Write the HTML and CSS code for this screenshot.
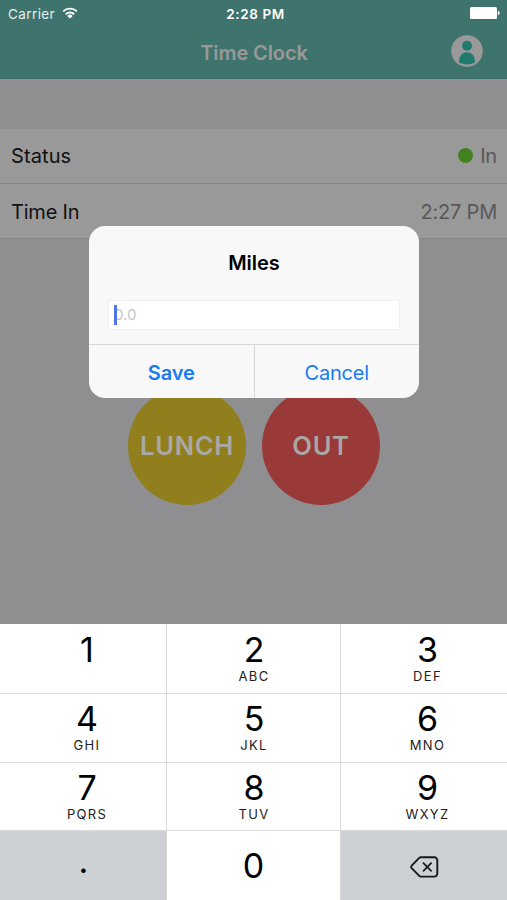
FILE: index.html
```html
<!DOCTYPE html>
<html lang="en">
<head>
    <meta charset="UTF-8">
    <title>Time Clock</title>
    <link rel="stylesheet" href="styles.css">
</head>
<body>
    <div class="phone">
        <div class="header">
            <div class="status-bar">
                <div class="carrier">
                    <span>Carrier</span>
                    <svg class="wifi" width="16" height="12" viewBox="0 0 16 12">
                        <path d="M1.2 4.4a9.8 9.8 0 0 1 13.6 0M3.8 7.2a6.1 6.1 0 0 1 8.4 0" fill="none" stroke="#fff" stroke-width="1.9"/>
                        <path d="M8 11.6L5.3 8.9a3.9 3.9 0 0 1 5.4 0z" fill="#fff"/>
                    </svg>
                </div>
                <div class="clock">2:28 PM</div>
                <svg class="battery" width="31" height="12" viewBox="0 0 31 12">
                    <rect x="1" width="27" height="12" rx="1.5" fill="#fff"/>
                    <path d="M28.8 4a2 2 0 0 1 0 4z" fill="#fff"/>
                </svg>
            </div>
            <div class="nav">
                <h1>Time Clock</h1>
                <svg class="user" width="32" height="32" viewBox="0 0 32 32">
                    <circle cx="16" cy="16" r="15.8" fill="#999"/>
                    <circle cx="16" cy="10.7" r="5" fill="#207a6f"/>
                    <path d="M8 27.3c0-6 3-10.1 8-10.1s8 4.1 8 10.1c-2.2 1.5-5 2.1-8 2.1s-5.8-.6-8-2.1z" fill="#207a6f"/>
                </svg>
            </div>
        </div>

        <ul class="list">
            <li>
                <span class="status">Status</span>
                <span class="value"><i class="dot"></i>In</span>
            </li>
            <li class="time">
                <span>Time In</span>
                <span class="value">2:27 PM</span>
            </li>
        </ul>

        <div class="actions">
            <div class="circle lunch">LUNCH</div>
            <div class="circle out">OUT</div>
        </div>

        <div class="keypad">
            <div class="key"><b>1</b></div>
            <div class="key"><b>2</b><small>ABC</small></div>
            <div class="key"><b>3</b><small>DEF</small></div>
            <div class="key"><b>4</b><small>GHI</small></div>
            <div class="key"><b>5</b><small>JKL</small></div>
            <div class="key"><b>6</b><small>MNO</small></div>
            <div class="key"><b>7</b><small>PQRS</small></div>
            <div class="key"><b>8</b><small>TUV</small></div>
            <div class="key"><b>9</b><small>WXYZ</small></div>
            <div class="key gray point"><b>.</b></div>
            <div class="key zero"><b>0</b></div>
            <div class="key gray">
                <svg class="delete" width="29" height="22" viewBox="0 0 29 22">
                    <path d="M11.2 1.2H24.3a3 3 0 0 1 3 3v13.4a3 3 0 0 1-3 3H11.2a3 3 0 0 1-2.2-.9L1.7 12.2a1.8 1.8 0 0 1 0-2.6L9 2.1a3 3 0 0 1 2.2-.9z" fill="none" stroke="#16181a" stroke-width="1.9"/>
                    <path d="M13 6.7l8.6 8.6M21.6 6.7L13 15.3" stroke="#16181a" stroke-width="1.7"/>
                </svg>
            </div>
        </div>

        <!-- dialog -->
        <div class="alert">
            <h2>Miles</h2>
            <div class="field"><i class="cursor"></i><span>0.0</span></div>
            <div class="buttons">
                <div class="save">Save</div>
                <div class="cancel">Cancel</div>
            </div>
        </div>
    </div>
</body>
</html>
```

FILE: styles.css
```css
*{
    margin:0;
    padding:0;
    box-sizing: border-box;
}
body{
    font-family: Inter, "Liberation Sans", sans-serif;
    background: #8f8f91;
}
.phone{
    position: relative;
    width:507px;
    height:900px;
    overflow: hidden;
    display: flex;
    flex-direction: column;
}

/* header */
.header{
    height:79px;
    background: #3f736d;
}
.status-bar{
    height:27px;
    padding:0 7px 0 8px;
    display: grid;
    grid-template-columns: 1fr auto 1fr;
    align-items: center;
    color:#fff;
    font-size: 13.5px;
}
.carrier{
    display: flex;
    align-items: center;
    gap:7px;
    color:#e4efed;
    letter-spacing: 0.4px;
}
.wifi{
    margin-top:-2px;
}
.clock{
    font-weight: 600;
    letter-spacing: 0.6px;
    padding-left:3px;
}
.battery{
    justify-self: end;
    margin-top:-1px;
}
.nav{
    height:51px;
    display: grid;
    grid-template-columns: 1fr auto 1fr;
    align-items: center;
    padding-right:24px;
    padding-left:25px;
}
.nav h1{
    grid-column: 2;
    font-size: 20px;
    font-weight: 600;
    letter-spacing: -0.1px;
    color:#999;
}
.nav .user{
    justify-self: end;
    margin-top:-3px;
}

/* list */
.list{
    list-style: none;
    margin-top:50px;
}
.list li{
    height:55px;
    display: flex;
    justify-content: space-between;
    align-items: center;
    padding:0 10px 0 11px;
    background: #999;
    border-bottom:1px solid #858587;
    font-size: 20px;
    letter-spacing: -0.2px;
    color:#111;
}
.list .time{
    padding-top:2px;
}
.list .status{
    letter-spacing: 0.1px;
}
.list .value{
    display: flex;
    align-items: center;
    color:#58585a;
}
.list .dot{
    width:15px;
    height:15px;
    border-radius: 50%;
    background: #438020;
    margin-right:7px;
    margin-top:-1px;
}

/* round buttons */
.actions{
    flex:1;
    display: flex;
    justify-content: center;
    gap:16px;
    padding-top:148px;
}
.circle{
    width:118px;
    height:118px;
    border-radius: 50%;
    display: flex;
    align-items: center;
    justify-content: center;
    padding-left:1px;
    padding-bottom:2px;
    font-size: 25.5px;
    font-weight: 600;
    letter-spacing: 0.7px;
    color:#aaa8a5;
}
.lunch{
    background: #917e1c;
}
.out{
    background: #993938;
}

/* keypad */
.keypad{
    height:276px;
    display: grid;
    grid-template-columns: 167px 174px 166px;
    grid-template-rows: 70px 69px 68px 69px;
    background: #fff;
}
.key{
    display: flex;
    flex-direction: column;
    align-items: center;
    padding-top:5px;
    padding-left:8px;
    border-right:1px solid #d8d8d9;
    border-bottom:1px solid #dcdcdd;
    color:#000;
}
.key:nth-child(3n+2){
    padding-left:1px;
}
.key:nth-child(3n){
    padding-left:7px;
    border-right:0;
}
.key:nth-child(-n+3){
    padding-top:6px;
}
.key:nth-child(n+10){
    border-bottom:0;
}
.key b{
    font-size: 34px;
    line-height: 39px;
    font-weight: 400;
}
.key small{
    font-size: 13px;
    line-height: 14px;
    letter-spacing: 1.3px;
    color:#222;
}
.key.gray,
.key.zero{
    padding:0;
    justify-content: center;
}
.key.gray{
    background: #cdd0d5;
    padding-left:1px;
}
.key.gray svg{
    margin-top:2px;
}
.key.point b{
    line-height: 28px;
    margin-bottom:9px;
}

/* alert */
.alert{
    position: absolute;
    left:89px;
    top:226px;
    width:330px;
    height:172px;
    border-radius: 16px;
    overflow: hidden;
    background: #f8f8f8;
    display: flex;
    flex-direction: column;
}
.alert h2{
    height:74px;
    line-height: 75px;
    text-align: center;
    font-size: 20px;
    font-weight: 600;
}
.field{
    height:30px;
    margin:0 19px;
    padding-left:5px;
    padding-bottom:1px;
    display: flex;
    align-items: center;
    background: #fff;
    border:1px solid #f1f1f1;
    font-size: 15px;
    color:#c4c5c9;
}
.cursor{
    width:3px;
    height:20px;
    margin-right:-3px;
    background: #4f74e3;
    z-index: 1;
}
.buttons{
    margin-top:auto;
    height:54px;
    display: flex;
    border-top:1px solid #d8d8d9;
    font-size: 20px;
    line-height: 56px;
    text-align: center;
    color:#177cf3;
}
.buttons div{
    flex:1;
}
.buttons .save{
    font-weight: 600;
    letter-spacing: -0.1px;
    border-right:1px solid #d8d8d9;
}
.buttons .cancel{
    letter-spacing: -0.2px;
}
```
